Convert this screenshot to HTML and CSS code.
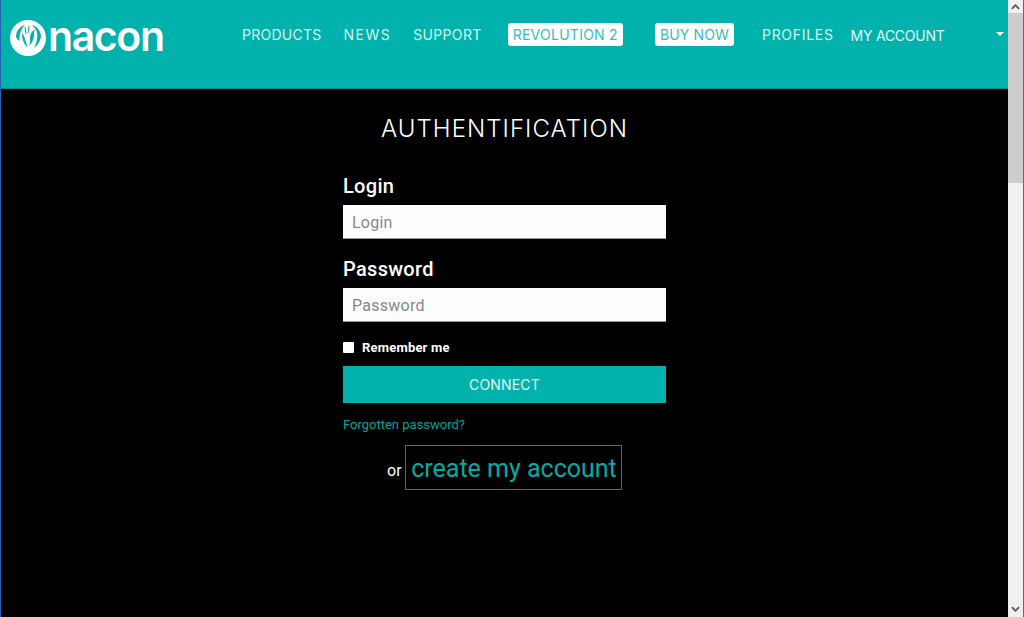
FILE: index.html
```html
<!DOCTYPE html>
<html lang="en">
<head>
  <meta charset="UTF-8" />
  <title>Nacon - Authentification</title>
  <link rel="stylesheet" href="styles.css">
</head>
<body>
  <div class="page">
    <header>
      <a class="logo" href="#">
        <svg class="logo-mark" viewBox="0 0 36 36" width="36" height="36">
          <circle cx="18" cy="18" r="18" fill="#fff"/>
          <path d="M6 17C6 11 10 6 15 5C11 9 9 14 9.500 21C8 20 7 19 6 17Z" fill="#00b2ab"/>
          <path d="M22 5C27 6 31 11 31 17C30 21 28 25 24 28C27 22 28 17 27 12C26 9 24 7 22 5Z" fill="#00b2ab"/>
          <path d="M12 13C14 15 15 18 16 23C17 24 17 25 17 27C14 24 12 20 12 13Z" fill="#00b2ab"/>
          <path d="M25 9C22 11 20 14 20 18C20 21 20 23 19 26C22 23 24 19 24 15C24 13 24 11 25 9Z" fill="#00b2ab"/>
          <path d="M15 7L16 14M19 6L18 13" stroke="#00b2ab" stroke-width="1" fill="none"/>
        </svg>
        <span class="logo-text">nacon</span>
      </a>
      <nav>
        <a class="nav-link nav-products" href="#">PRODUCTS</a>
        <a class="nav-link nav-news" href="#">NEWS</a>
        <a class="nav-link nav-support" href="#">SUPPORT</a>
        <a class="nav-pill nav-revolution" href="#">REVOLUTION 2</a>
        <a class="nav-pill nav-buy" href="#">BUY NOW</a>
        <a class="nav-link nav-profiles" href="#">PROFILES</a>
        <a class="nav-link nav-account" href="#">MY ACCOUNT</a>
        <span class="caret"></span>
      </nav>
    </header>

    <main>
      <h1>AUTHENTIFICATION</h1>
      <form class="login-box">
        <label class="field-label" for="login">Login</label>
        <input type="text" id="login" placeholder="Login" />
        <label class="field-label" for="password">Password</label>
        <input type="password" id="password" placeholder="Password" />
        <label class="remember"><span class="check"></span> Remember me</label>
        <button type="button">CONNECT</button>
        <a class="forgot" href="#">Forgotten password?</a>
        <div class="create">
          <span>or</span>
          <a href="#">create my account</a>
        </div>
      </form>
    </main>
  </div>

  <div class="scrollbar">
    <div class="scroll-btn scroll-up">
      <svg viewBox="0 0 10 6" width="9" height="6"><path d="M1 5L5 1L9 5" fill="none" stroke="#555" stroke-width="2"/></svg>
    </div>
    <div class="scroll-thumb"></div>
    <div class="scroll-track"></div>
    <div class="scroll-btn scroll-down">
      <svg viewBox="0 0 10 6" width="9" height="6"><path d="M1 1L5 5L9 1" fill="none" stroke="#555" stroke-width="2"/></svg>
    </div>
  </div>
</body>
</html>
```

FILE: styles.css
```css
* { margin: 0; padding: 0; box-sizing: border-box; }

html, body { height: 100%; overflow: hidden; }

body {
  display: flex;
  font-family: 'Roboto', sans-serif;
  background: #000;
  color: #fff;
  border-left: 1px solid #1e62b0;
  border-right: 1px solid #2f78b8;
}

a { text-decoration: none; }

.page {
  flex: 1;
  min-width: 0;
}

header {
  height: 89px;
  background: #00b2ab;
  border-bottom: 1px solid #008f8a;
  display: flex;
  align-items: flex-start;
  padding: 0 0 0 9px;
}

.logo {
  display: flex;
  align-items: center;
  gap: 2px;
  width: 232px;
  height: 76px;
  color: #fff;
}

.logo-text {
  font-family: 'Inter', sans-serif;
  font-weight: 600;
  font-size: 41px;
  letter-spacing: -1.4px;
  line-height: 1;
  margin-top: -4px;
}

nav {
  display: flex;
  align-items: center;
  height: 68px;
  flex: 1;
  font-family: 'Inter', sans-serif;
  font-size: 14px;
  letter-spacing: 0.15px;
}

.nav-link { color: #d8f3f1; }

.nav-products { margin-right: 22px; letter-spacing: 0.25px; }
.nav-news { margin-right: 22px; letter-spacing: 1.5px; }
.nav-support { margin-right: 26px; letter-spacing: 0.35px; }

.nav-pill {
  background: #fff;
  color: #33bfb9;
  height: 23px;
  line-height: 23px;
  padding: 0 5px;
  border-radius: 3px;
}

.nav-revolution { margin-right: 32px; letter-spacing: 0.25px; }
.nav-buy { margin-right: 28px; }
.nav-profiles { margin-right: 17px; letter-spacing: 0.7px; }

.nav-account {
  position: relative;
  top: 1px;
  color: #e8f8f7;
  letter-spacing: -0.25px;
}

.caret {
  width: 0;
  height: 0;
  margin-left: 51px;
  border-left: 4px solid transparent;
  border-right: 4px solid transparent;
  border-top: 4px solid #fff;
}

main {
  display: flex;
  flex-direction: column;
  align-items: center;
}

h1 {
  font-family: 'Inter', sans-serif;
  font-weight: 300;
  font-size: 24px;
  line-height: 30px;
  margin-top: 25px;
  letter-spacing: 1.05px;
}

.login-box {
  width: 323px;
  display: flex;
  flex-direction: column;
  margin-top: 30px;
}

.field-label {
  font-size: 20px;
  font-weight: 500;
  line-height: 24px;
  letter-spacing: 0.3px;
  margin-bottom: 7px;
}

.login-box input {
  width: 100%;
  height: 34px;
  border: none;
  border-bottom: 1px solid #999;
  background: #fdfdfd;
  padding: 2px 9px 0;
  font-family: 'Roboto', sans-serif;
  font-size: 16px;
  letter-spacing: 0.25px;
  margin-bottom: 18px;
}

.login-box input::placeholder { color: #888; opacity: 1; }

.remember {
  display: flex;
  align-items: center;
  gap: 8px;
  font-size: 13px;
  font-weight: 700;
  letter-spacing: 0.2px;
  height: 16px;
  margin-top: -1px;
  margin-bottom: 11px;
}

.check {
  width: 11px;
  height: 11px;
  background: #fff;
  border-radius: 1px;
}

.login-box button {
  height: 37px;
  background: #00b2ab;
  border: none;
  color: #e0f5f4;
  font-family: 'Inter', sans-serif;
  font-size: 14px;
  letter-spacing: 0.15px;
}

.forgot {
  color: #00a39b;
  font-size: 13px;
  line-height: 16px;
  margin-top: 14px;
}

.create {
  display: flex;
  align-items: center;
  justify-content: center;
  gap: 4px;
  margin-top: 12px;
}

.create span {
  width: 14px;
  font-size: 16px;
  margin-top: 6px;
}

.create a {
  width: 217px;
  height: 45px;
  color: #00aca6;
  font-size: 25px;
  line-height: 45px;
  padding-left: 1px;
  text-align: center;
  white-space: nowrap;
  border: 1px solid #00908a;
}

.scrollbar {
  width: 15px;
  height: 100%;
  display: flex;
  flex-direction: column;
  background: #f0f0f0;
}

.scroll-btn {
  display: flex;
  align-items: center;
  justify-content: center;
}

.scroll-up { height: 13px; }
.scroll-down { height: 16px; }

.scroll-thumb {
  height: 170px;
  background: #cdcdcd;
}

.scroll-track { flex: 1; }
```
